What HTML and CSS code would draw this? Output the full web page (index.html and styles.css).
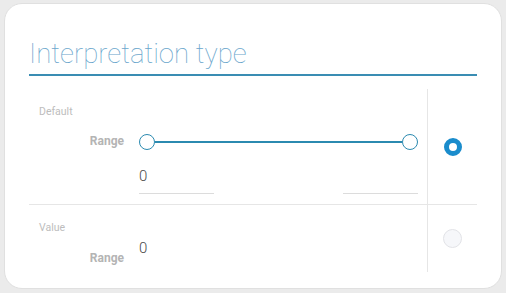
FILE: index.html
```html
<!DOCTYPE html>
<html lang="en">
<head>
    <meta charset="UTF-8">
    <meta name="viewport" content="width=device-width, initial-scale=1.0">
    <title>Interpretation type</title>
    <link rel="stylesheet" href="styles.css">
</head>
<body>
    <div class="card">
        <h2 class="card-title">Interpretation type</h2>
        <div class="types">
            <div class="type-row">
                <div class="type-body">
                    <div class="type-name">Default</div>
                    <div class="field">
                        <div class="field-label">Range</div>
                        <div class="field-control">
                            <div class="slider">
                                <span class="thumb"></span>
                                <span class="track"></span>
                                <span class="thumb"></span>
                            </div>
                            <div class="range-inputs">
                                <div class="range-input">0</div>
                                <div class="range-input"></div>
                            </div>
                        </div>
                    </div>
                </div>
                <div class="type-select">
                    <span class="radio checked"></span>
                </div>
            </div>
            <div class="type-row">
                <div class="type-body type-body-short">
                    <div class="type-name">Value</div>
                    <div class="field field-value">
                        <div class="field-label">Range</div>
                        <div class="value-text">0</div>
                    </div>
                </div>
                <div class="type-select">
                    <span class="radio"></span>
                </div>
            </div>
        </div>
    </div>
</body>
</html>
```

FILE: styles.css
```css
body, html {
    margin: 0;
    background-color: #ebebeb;
    font-family: Roboto, "Noto Sans", sans-serif;
}
.card {
    margin: 3px 4px;
    height: 286px;
    box-sizing: border-box;
    padding: 34px 24px 0 24px;
    background-color: #FFFFFF;
    border: 1px solid #e0e0e0;
    border-radius: 18px;
}
.card-title {
    margin: 0;
    padding-bottom: 4px;
    font-size: 27.6px;
    line-height: 32px;
    font-weight: 100;
    color: #6aa6cc;
    border-bottom: 2px solid #3a8db3;
}
.types {
    margin-top: 13px;
}
.type-row {
    display: flex;
}
.type-row + .type-row {
    border-top: 1px solid #e6e6e6;
}
.type-body {
    flex: 1;
    padding: 17px 0 10px 10px;
}
.type-body-short {
    padding-bottom: 7px;
}
.type-name {
    font-size: 10.5px;
    line-height: 12px;
    color: #bdbdbd;
}
.field {
    display: flex;
    margin-top: 16px;
}
.field-label {
    width: 85px;
    margin-right: 15px;
    text-align: right;
    font-size: 12px;
    line-height: 14px;
    font-weight: 700;
    color: #b4b4b4;
}
.field-control {
    width: 279px;
}
.slider {
    display: flex;
    align-items: center;
    height: 16px;
}
.thumb {
    width: 16px;
    height: 16px;
    box-sizing: border-box;
    border: 1.5px solid #2b8ab0;
    border-radius: 50%;
    background-color: #FFFFFF;
}
.track {
    flex: 1;
    height: 2px;
    background-color: #2b8ab0;
}
.range-inputs {
    display: flex;
    justify-content: space-between;
    margin-top: 17px;
}
.range-input {
    width: 75px;
    height: 18px;
    padding-bottom: 8px;
    font-size: 15px;
    line-height: 18px;
    font-weight: 300;
    color: #4a4a4a;
    border-bottom: 1px solid #dcdcdc;
}
.field-value {
    margin-top: 5px;
}
.field-value .field-label {
    margin-top: 12px;
}
.value-text {
    font-size: 15px;
    line-height: 18px;
    font-weight: 300;
    color: #4a4a4a;
}
.type-select {
    width: 49px;
    display: flex;
    justify-content: center;
    align-items: center;
    border-left: 1px solid #e6e6e6;
}
.radio {
    width: 19px;
    height: 19px;
    box-sizing: border-box;
    border-radius: 50%;
    border: 1.5px solid #e2e3e7;
    background-color: #f6f7fa;
}
.radio.checked {
    width: 18px;
    height: 18px;
    border: 5px solid #1a8ccc;
    background-color: #FFFFFF;
}
```
